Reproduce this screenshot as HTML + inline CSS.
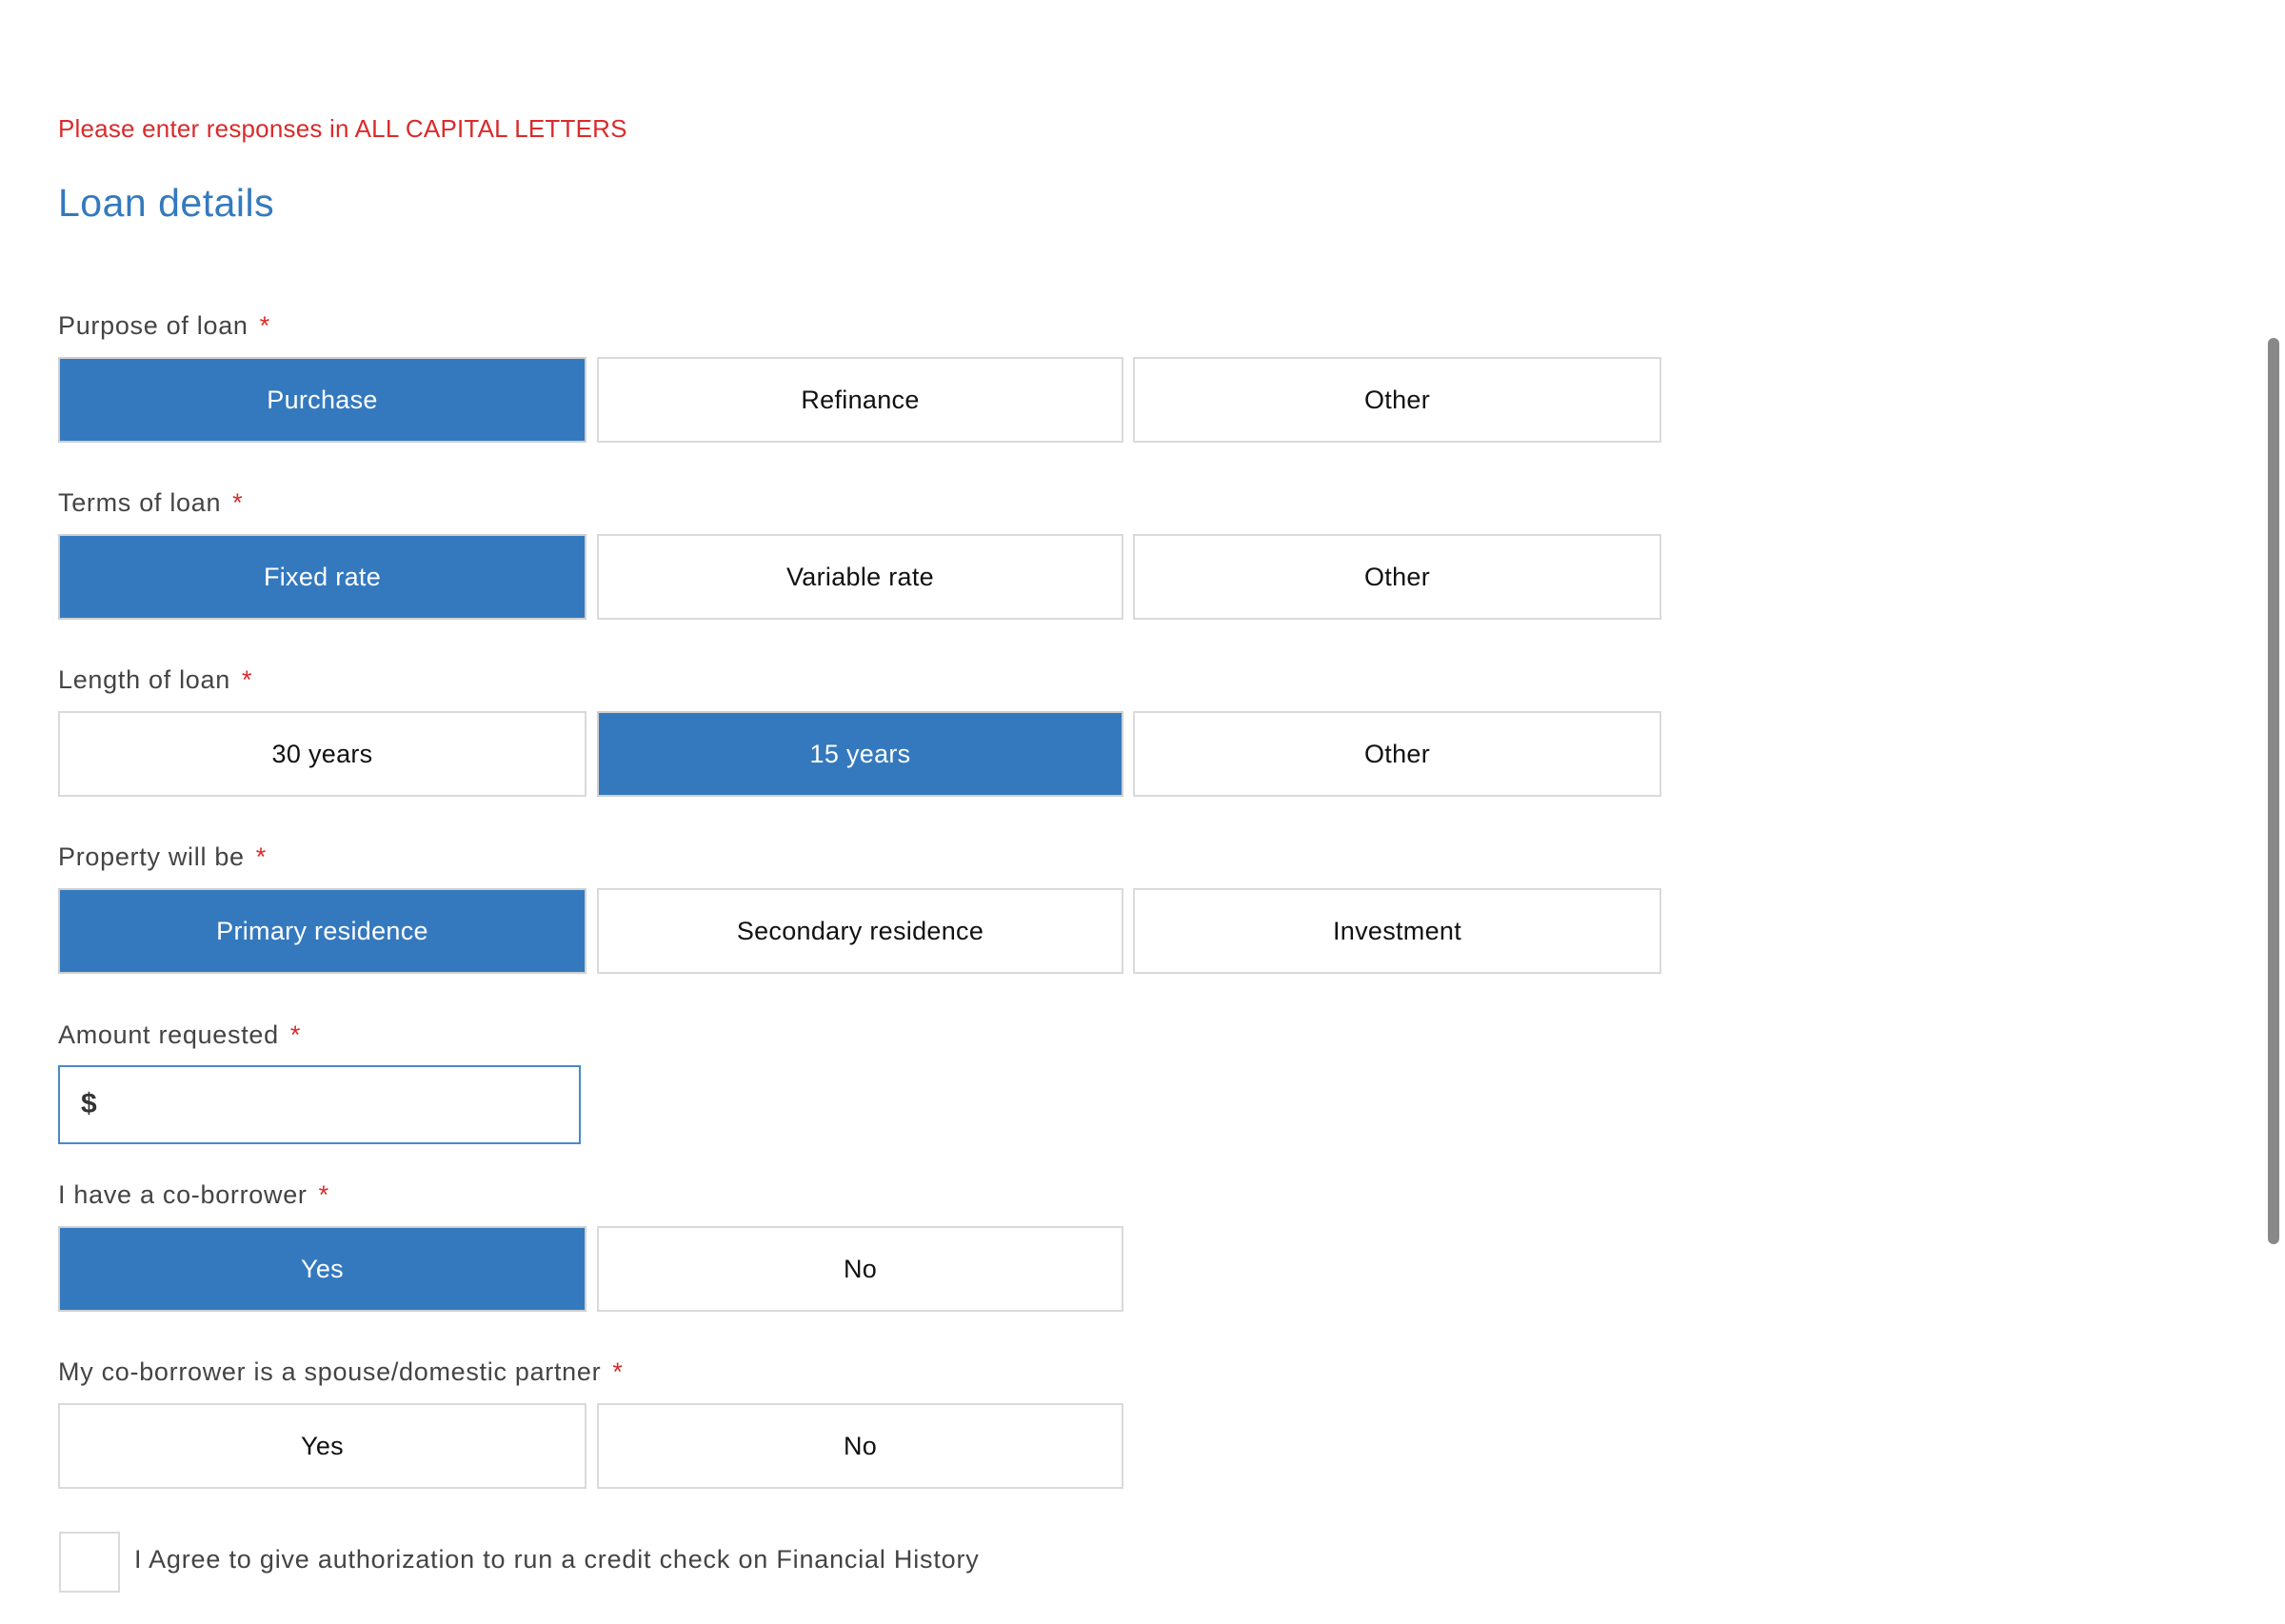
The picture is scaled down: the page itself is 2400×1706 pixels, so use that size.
<!DOCTYPE html>
<html><head><meta charset="utf-8"><style>
html,body{margin:0;padding:0;background:#fff;width:2400px;height:1706px;overflow:hidden;font-family:"Liberation Sans",sans-serif;}
.a{position:absolute;}
.red{color:#d92b2b;font-size:26px;left:61px;top:120px;letter-spacing:0.2px;}
h1{position:absolute;margin:0;left:61px;top:190px;font-size:41px;font-weight:normal;color:#3479be;letter-spacing:0.5px;}
.lbl{position:absolute;left:61px;font-size:27px;color:#444;line-height:32px;letter-spacing:0.7px;}
.lbl b{color:#d92b2b;font-weight:normal;margin-left:12px;}
.btn{position:absolute;box-sizing:border-box;border:2px solid #dadada;background:#fff;color:#111;font-size:27px;display:flex;align-items:center;justify-content:center;height:90px;letter-spacing:0.3px;}
.on{background:#3479be;color:#fff;border-color:#d0d0d0;}
.c1{left:61px;width:555px}.c2{left:627px;width:553px}.c3{left:1190px;width:555px}
</style></head><body>
<div class="a red">Please enter responses in ALL CAPITAL LETTERS</div>
<h1>Loan details</h1>

<div class="lbl" style="top:326px">Purpose of loan<b>*</b></div>
<div class="btn on c1" style="top:375px">Purchase</div>
<div class="btn c2" style="top:375px">Refinance</div>
<div class="btn c3" style="top:375px">Other</div>

<div class="lbl" style="top:512px">Terms of loan<b>*</b></div>
<div class="btn on c1" style="top:561px">Fixed rate</div>
<div class="btn c2" style="top:561px">Variable rate</div>
<div class="btn c3" style="top:561px">Other</div>

<div class="lbl" style="top:698px">Length of loan<b>*</b></div>
<div class="btn c1" style="top:747px">30 years</div>
<div class="btn on c2" style="top:747px">15 years</div>
<div class="btn c3" style="top:747px">Other</div>

<div class="lbl" style="top:884px">Property will be<b>*</b></div>
<div class="btn on c1" style="top:933px">Primary residence</div>
<div class="btn c2" style="top:933px">Secondary residence</div>
<div class="btn c3" style="top:933px">Investment</div>

<div class="lbl" style="top:1071px">Amount requested<b>*</b></div>
<div class="a" style="left:61px;top:1119px;width:549px;height:83px;box-sizing:border-box;border:2px solid #4a88c8;font-size:30px;color:#333;padding-left:22px;line-height:77px;font-weight:bold;">$</div>

<div class="lbl" style="top:1239px">I have a co-borrower<b>*</b></div>
<div class="btn on c1" style="top:1288px">Yes</div>
<div class="btn c2" style="top:1288px">No</div>

<div class="lbl" style="top:1425px">My co-borrower is a spouse/domestic partner<b>*</b></div>
<div class="btn c1" style="top:1474px">Yes</div>
<div class="btn c2" style="top:1474px">No</div>

<div class="a" style="left:62px;top:1609px;width:64px;height:64px;box-sizing:border-box;border:2px solid #dadada;"></div>
<div class="a" style="left:141px;top:1623px;font-size:27px;color:#444;letter-spacing:0.8px;">I Agree to give authorization to run a credit check on Financial History</div>

<div class="a" style="left:2382px;top:355px;width:12px;height:952px;background:#888;border-radius:6px;"></div>
</body></html>
